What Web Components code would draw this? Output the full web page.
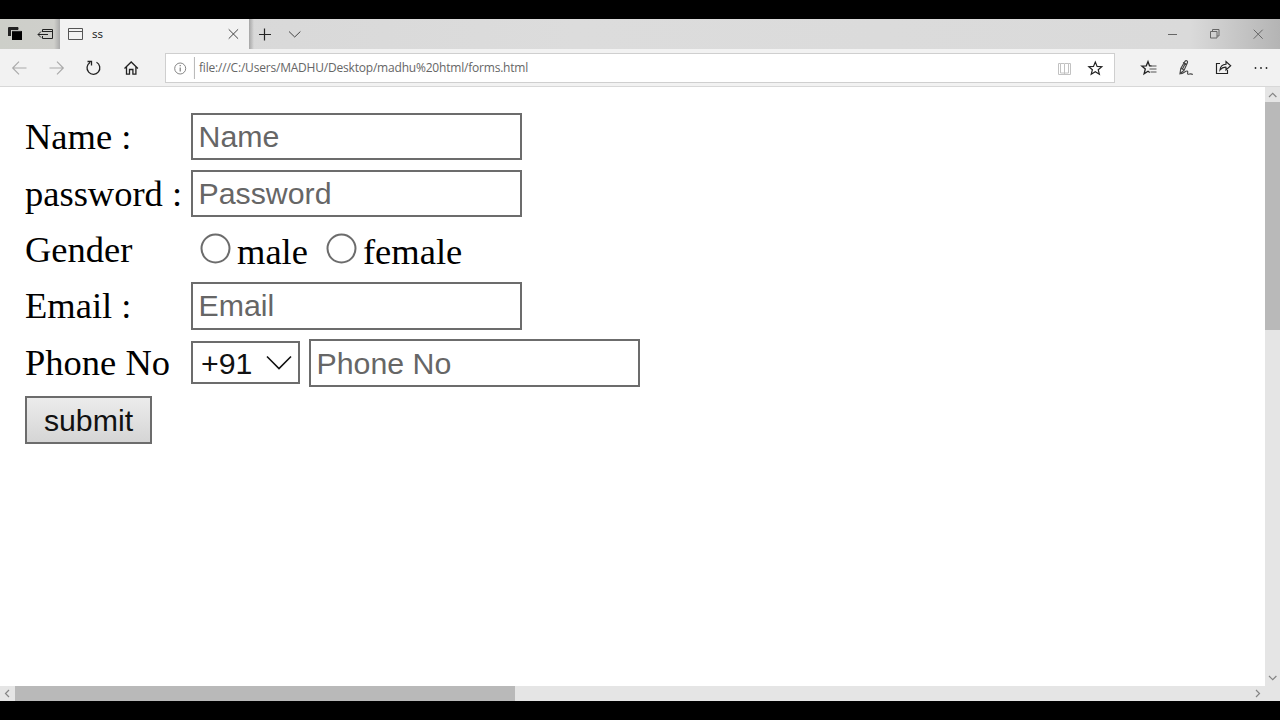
<!DOCTYPE html>
<html lang="en">
<head>
<meta charset="utf-8">
<title>ss</title>
<style>
html,body{margin:0;height:100%;background:#000;overflow:hidden}
</style>
</head>
<body>
<browser-window>
  <tab-strip slot="tabs"><span>ss</span></tab-strip>
  <nav-bar slot="nav">file:///C:/Users/MADHU/Desktop/madhu%20html/forms.html</nav-bar>
  <sign-form>
    <form-row style="--h:47px;--gap:10px" label="Name :"><text-field>Name</text-field></form-row>
    <form-row style="--h:47px;--gap:9px" label="password :"><text-field>Password</text-field></form-row>
    <form-row style="--h:47px;--gap:9px" label="Gender"><radio-option style="margin-left:9px">male</radio-option><radio-option style="margin-left:18px">female</radio-option></form-row>
    <form-row style="--h:48px;--gap:9px" label="Email :"><text-field>Email</text-field></form-row>
    <form-row style="--h:48px;--gap:9px" label="Phone No"><code-select>+91</code-select><text-field style="margin-left:9px;--line:45px">Phone No</text-field></form-row>
    <push-button>submit</push-button>
  </sign-form>
</browser-window>
<script>
const define = (name, html) => customElements.define(name, class extends HTMLElement {
  constructor() {
    super();
    this.attachShadow({mode: 'open'}).innerHTML = html;
    const label = this.shadowRoot.querySelector('.label');
    if (label) label.textContent = this.getAttribute('label');
  }
});

define('browser-window', `
<style>
:host{display:grid;grid-template-rows:30px 38px 599px 15px;grid-template-columns:1265px 15px;width:1280px;height:682px;padding:19px 0;background:#000}
slot[name]{display:contents}
.page{background:#fff;overflow:hidden}
.page slot{display:block}
</style>
<slot name="tabs"></slot><slot name="nav"></slot>
<div class="page"><slot></slot></div>
<scroll-bar-y></scroll-bar-y><scroll-bar-x></scroll-bar-x>`);

define('scroll-bar-y', `
<style>
:host{display:flex;flex-direction:column;background:#e5e5e5}
i{height:228px;background:#b9b9b9}
b{flex:1}
svg{display:block;fill:none;stroke:#858585;stroke-width:1.2}
</style>
<svg width="15" height="15"><path d="M4 10l3.7-3.7L11.4 10"/></svg><i></i><b></b>
<svg width="15" height="15"><path d="M4 5l3.7 3.7L11.4 5"/></svg>`);

define('scroll-bar-x', `
<style>
:host{display:flex;grid-column:1/3;background:#e5e5e5}
i{width:500px;background:#b9b9b9}
b{flex:1}
svg{display:block;fill:none;stroke:#858585;stroke-width:1.2}
.end{margin-right:15px}
</style>
<svg width="15" height="15"><path d="M9 4L5.5 7.5 9 11"/></svg><i></i><b></b>
<svg class="end" width="15" height="15"><path d="M6 4l3.5 3.5L6 11"/></svg>`);

define('tab-strip', `
<style>
:host{grid-column:1/3;display:flex;height:30px;background:linear-gradient(90deg,#d6d6d6 0,#dcdcdc 45%,#dadada 93%,#b4b4b4 100%);font:12px "Open Sans","Noto Sans",sans-serif;color:#111}
svg{display:block;fill:none;stroke:#333;stroke-width:1}
.left{width:60px;background:linear-gradient(90deg,#cdcfc9,#cfcfcb 90%,#aaa)}
.tab{width:189px;height:30px;background:#f2f2f2;display:flex}
.title{width:124px;padding-left:2px;line-height:30px;font-size:11.5px}
.add{background:linear-gradient(90deg,#a5a5a5,transparent 5px)}
.controls{margin-left:auto}
</style>
<svg class="left" width="60" height="30">
 <path d="M8.500 17V8.500h9.500v2" stroke="#222"/><path d="M9 9h9v2h-7v6H9z" fill="#222" stroke="none"/><path d="M12 12h10v9H12z" fill="#000" stroke="none"/><path d="M12 12h9.500" stroke="#888" stroke-width=".6"/>
 <path d="M42.500 13V10.500h10v9h-10V17M43 12.500h9M38 15.500h10M41 12.500l-3 3 3 3" stroke="#222"/>
</svg>
<div class="tab">
 <svg width="30" height="30"><path d="M8.500 9.500h14v11h-14zM8.500 12.500h14" stroke="#555"/></svg>
 <div class="title"><slot></slot></div>
 <svg width="31" height="30"><path d="M12.700 10.300l9.400 9.400M22.100 10.300l-9.400 9.400" stroke="#444"/></svg>
</div>
<svg class="add" width="70" height="30"><path d="M10 15.500h12M15.500 9.500v12" stroke="#222" stroke-width="1.2"/><path d="M40 12.500l5.700 5.500 5.700-5.500" stroke="#444"/></svg>
<svg class="controls" width="130" height="30" style="stroke:#666">
 <path d="M18 15.500h9"/><path d="M60.500 12.500h6.500v6.500h-6.500zM62.500 12.500v-2H69V17h-2"/><path d="M103.700 10.700l9 9M112.700 10.700l-9 9"/>
</svg>`);

define('nav-bar', `
<style>
:host{grid-column:1/3;display:flex;height:37px;background:#f2f2f2;border-bottom:1px solid #d8d8d8;box-sizing:content-box}
svg{display:block;fill:none;stroke:#222;stroke-width:1.15}
.box{margin-top:4px;width:948px;height:28px;border:1px solid #cfcfcf;background:#fff;display:flex}
.url{white-space:nowrap;flex:1;font:12px/28px "Open Sans","Noto Sans",sans-serif;letter-spacing:-.2px;color:#666;padding-left:4px}
</style>
<svg width="165" height="37">
 <path d="M12.500 19h14M19 12.700L12.700 19l6.300 6.300M49.500 19h14M57 12.700l6.300 6.300-6.300 6.300" stroke="#aaa"/>
 <path d="M96.500 13.300A6.400 6.400 0 1 1 90 13.500M87.500 12.500h4v4" stroke-width="1.3"/>
 <path d="M124.500 19.500l6.700-6.500 6.700 6.500M126.500 18v7.200h3v-4.700h3.400v4.700h3V18" stroke-width="1.3"/>
</svg>
<div class="box">
 <svg width="29" height="28"><circle cx="14.200" cy="14.500" r="5.500" stroke="#777" stroke-width=".9"/><path d="M14.200 13.500v4M14.200 11v1.200" stroke="#777"/><path d="M28.500 3v22" stroke="#bbb"/></svg>
 <div class="url"><slot></slot></div>
 <svg width="66" height="28">
  <path d="M12.500 9.500h-2v11h5.500l.5.500.5-.5h5.500v-11h-2M16.500 10v11M16.500 9.500h-4V19h4M16.500 9.500h4V19h-4" stroke="#c2c2c2" stroke-width="1"/>
  <path d="M47.300 8l1.800 4.400 4.700.3-3.600 3 1.200 4.600-4.100-2.600-4.100 2.600 1.200-4.600-3.600-3 4.700-.3z"/>
 </svg>
</div>
<svg width="165" height="37">
 <path d="M36.500 16.800h-2L33 12.500l-1.700 4.300-4.500.2 3.500 3-1.200 4.800 3.900-2.500 1.800 1.200" stroke-width="1.300"/><path d="M35.500 17h6M34.500 20h7M35.500 23h6" stroke="#555" stroke-width="1"/>
 <path d="M65 24.500l.8-5L70 12.300c1-1.300 3-.3 2.500 1.300L69 21.500zM68 13.500l3.500 2M65 24.500c2.500 1 6-3.500 7.500-2.300 1 1-.8 2.600.5 3 1.500.3 2.200-1.200 4.800.2M66.500 19.500l3 1.700M70.500 14l-3 6" stroke="#444"/>
 <path d="M105 14.500h-3.500v10h11V21M105 21c.3-3.700 2.700-5.500 6-5.700v-2.800l4.700 4.300-4.700 4.200v-2.800c-2.700-.2-4.500.8-6 2.800z"/>
 <g fill="#222" stroke="none"><circle cx="140.500" cy="19" r=".9"/><circle cx="146" cy="19" r=".9"/><circle cx="151.500" cy="19" r=".9"/></g>
</svg>`);

define('sign-form', `
<style>:host{display:flex;flex-direction:column;align-items:flex-start;padding:26px 0 0 25px}</style><slot></slot>`);

define('form-row', `
<style>
:host{display:flex;align-items:center;height:var(--h);margin-bottom:var(--gap)}
.label{width:166px;font:36.500px/47px "Liberation Serif",serif;color:#000;white-space:nowrap;margin-top:-1px}
</style><div class="label"></div><slot></slot>`);

define('text-field', `
<style>
:host{display:block;box-sizing:border-box;width:331px;height:100%;border:2px solid #6c6c6c;background:#fff;padding-left:5.500px;font:30.300px/var(--line,44px) "Liberation Sans",sans-serif;color:#666;white-space:nowrap}
</style><slot></slot>`);

define('radio-option', `
<style>
:host{display:flex;font:36.500px/47px "Liberation Serif",serif;color:#000}
svg{display:block;width:31px;height:31px;margin:8px 6px 0 0;fill:#fff;stroke:#6c6c6c;stroke-width:2}
span{margin-top:3px}
</style><svg><circle cx="15.500" cy="15.500" r="14"/></svg><span><slot></slot></span>`);

define('code-select', `
<style>
:host{display:flex;box-sizing:border-box;width:109px;height:43px;margin-bottom:1px;border:2px solid #6c6c6c;background:#fff;font:30.300px/42px "Liberation Sans",sans-serif;color:#111;padding-left:8px}
svg{display:block;fill:none;stroke:#111;stroke-width:1.600;margin-left:auto}
</style><slot></slot><svg width="34" height="39"><path d="M3 13.500l12 12 12-12"/></svg>`);

define('push-button', `
<style>
:host{display:block;box-sizing:border-box;width:127px;height:48px;border:2px solid #6c6c6c;background:linear-gradient(#ececec,#d5d5d5);font:30.300px/46px "Liberation Sans",sans-serif;color:#111;text-align:center}
</style><slot></slot>`);
</script>
</body>
</html>
